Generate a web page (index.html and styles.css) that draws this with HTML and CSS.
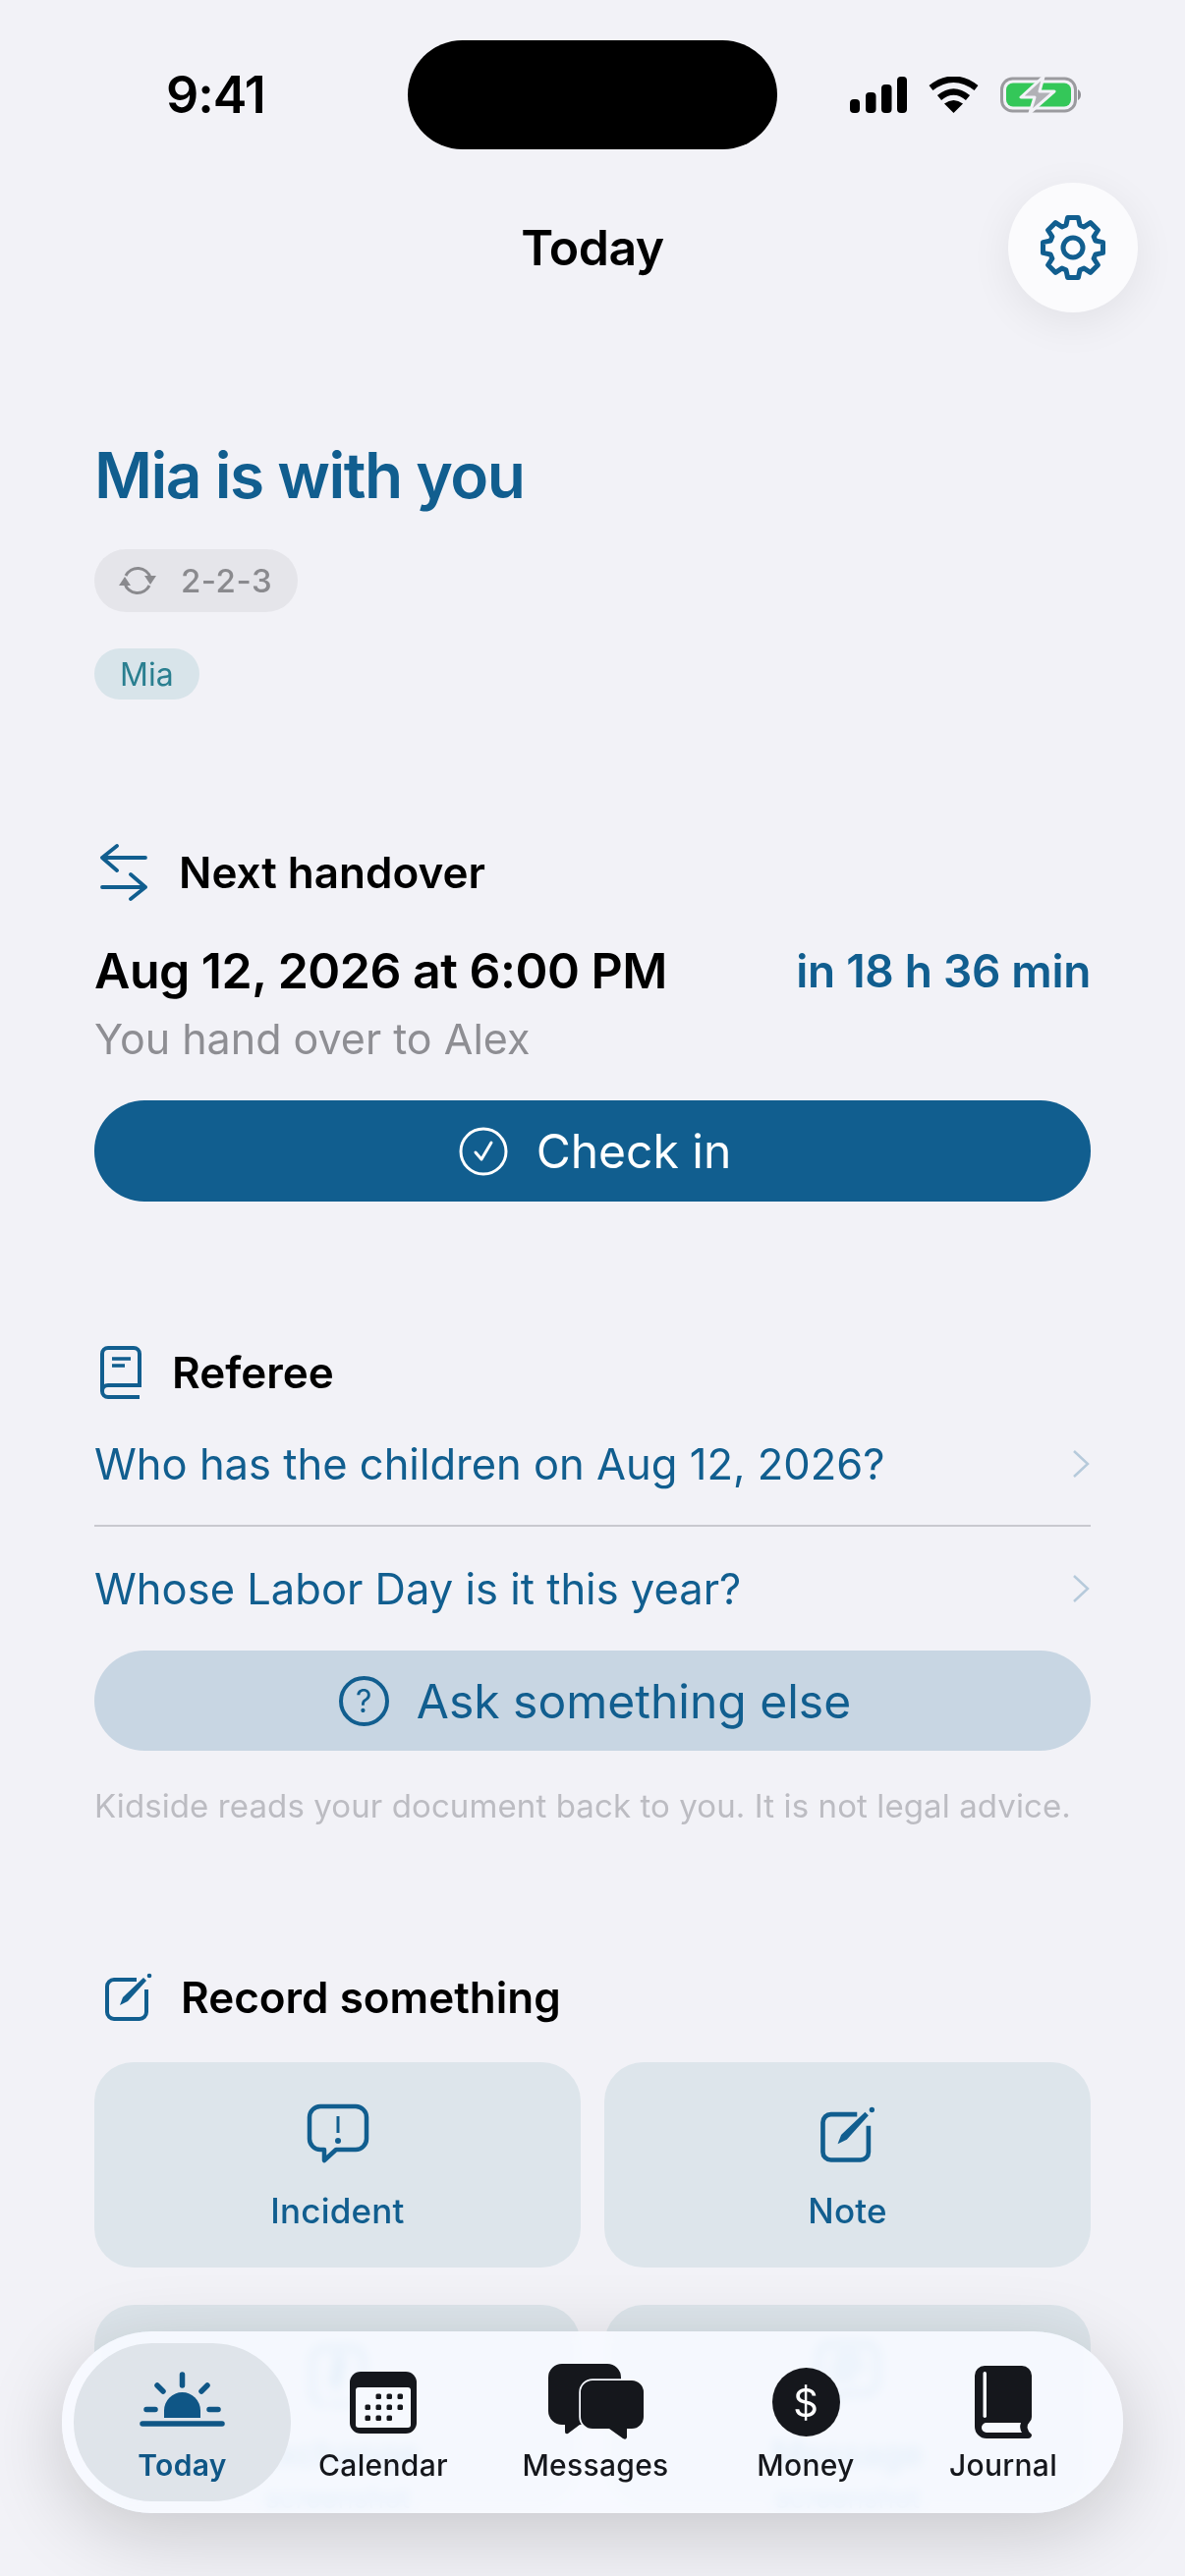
FILE: index.html
```html
<!DOCTYPE html>
<html lang="en">

<head>
  <meta charset="UTF-8">
  <title>Today</title>
  <link rel="stylesheet" href="styles.css">
</head>

<body>
  <div class="screen">

    <!-- Status bar -->
    <div class="status-bar">
      <span class="time">9:41</span>
      <div class="island"></div>
      <div class="status-icons">
        <svg class="signal" width="58" height="37" viewBox="0 0 58 37">
          <rect x="0" y="23" width="10" height="14" rx="4"/>
          <rect x="16" y="16" width="10.500" height="21" rx="4"/>
          <rect x="32" y="8" width="10.500" height="29" rx="4"/>
          <rect x="48" y="0" width="10" height="37" rx="4"/>
        </svg>
        <svg class="wifi" width="51" height="37" viewBox="0 0 51 37">
          <path d="M2.500 11.500Q25.500 -6 48.500 11.500" fill="none" stroke="#000" stroke-width="6.500"/>
          <path d="M11 21.500Q25.500 9.500 40 21.500" fill="none" stroke="#000" stroke-width="6.500"/>
          <path d="M25.500 37L16 27.500Q25.500 20.500 35 27.500Z"/>
        </svg>
        <svg class="battery" width="82" height="39" viewBox="0 0 82 39">
          <rect x="1.500" y="3" width="75" height="33" rx="11" fill="none" stroke="#9b9b9f" stroke-width="3"/>
          <rect x="6" y="7.500" width="66" height="24" rx="7" fill="#34c759"/>
          <path d="M79 14C81 15 82 17 82 19.500C82 22 81 24 79 25Z" fill="#8e8e93"/>
          <polygon points="44,1 21,22 35,22 30,38 55,16 40,16" fill="#b1b1b6" stroke="#f2f2f7" stroke-width="3" stroke-linejoin="round"/>
        </svg>
      </div>
    </div>

    <!-- Title bar -->
    <div class="title-bar">
      <span></span>
      <h2 class="page-title">Today</h2>
      <button class="gear-button">
        <svg width="70" height="70" viewBox="-35 -35 70 70" fill="none" stroke="#115e8f" stroke-width="5" stroke-linejoin="round">
          <polygon points="-7,-22.900 -5.400,-30.500 5.400,-30.500 7,-22.900 11.240,-21.140 17.750,-25.390 25.390,-17.750 21.140,-11.240 22.900,-7 30.500,-5.400 30.500,5.400 22.900,7 21.140,11.240 25.390,17.750 17.750,25.390 11.240,21.140 7,22.900 5.400,30.500 -5.400,30.500 -7,22.900 -11.240,21.140 -17.750,25.390 -25.390,17.750 -21.140,11.240 -22.900,7 -30.500,5.400 -30.500,-5.400 -22.900,-7 -21.140,-11.240 -25.390,-17.750 -17.750,-25.390 -11.240,-21.140"/>
          <circle r="10"/>
        </svg>
      </button>
    </div>

    <div class="content">

      <!-- Who is here -->
      <h1 class="hero">Mia is with you</h1>
      <div class="pill pill-schedule">
        <svg width="40" height="40" viewBox="0 0 40 40">
          <path d="M8 15A13.500 13.500 0 0 1 33 17M32 25A13.500 13.500 0 0 1 7 23" fill="none" stroke="#8a8a8e" stroke-width="3"/>
          <path d="M27 15H39L33 24ZM1 25H13L7 16Z" fill="#8a8a8e"/>
        </svg>
        <span>2-2-3</span>
      </div>
      <div class="pill pill-child">Mia</div>

      <!-- Next handover -->
      <div class="section-head section-handover">
        <svg width="48" height="58" viewBox="0 0 48 58" fill="none" stroke="#115e8f" stroke-width="3.800" stroke-linecap="round" stroke-linejoin="round">
          <path d="M46 14H2M17 2L2 14L17 27"/>
          <path d="M2 44H46M31 31L46 44L31 56"/>
        </svg>
        <span>Next handover</span>
      </div>
      <div class="handover-row">
        <span class="handover-date">Aug 12, 2026 at 6:00 PM</span>
        <span class="handover-left">in 18 h 36 min</span>
      </div>
      <div class="handover-sub">You hand over to Alex</div>
      <button class="wide-button button-primary">
        <svg width="50" height="50" viewBox="0 0 50 50" fill="none" stroke="#fff" stroke-width="3">
          <circle cx="25" cy="25" r="23"/>
          <path d="M17 26L23 33L33 16" stroke-linecap="round" stroke-linejoin="round"/>
        </svg>
        <span>Check in</span>
      </button>

      <!-- Referee -->
      <div class="section-head section-referee">
        <svg width="42" height="54" viewBox="0 0 42 54" fill="none" stroke="#115e8f" stroke-width="4">
          <path d="M2 46V8A6 6 0 0 1 8 2H34A6 6 0 0 1 40 8V40H8A6 6 0 0 0 8 52H40"/>
          <path d="M12 13H31M12 20H25" stroke-width="3.500"/>
        </svg>
        <span>Referee</span>
      </div>
      <div class="question">
        <span>Who has the children on Aug 12, 2026?</span>
        <svg width="20" height="30" viewBox="0 0 20 30" fill="none" stroke="#b6cadb" stroke-width="2.500"><path d="M3 2L17 15L3 28"/></svg>
      </div>
      <div class="question question-last">
        <span>Whose Labor Day is it this year?</span>
        <svg width="20" height="30" viewBox="0 0 20 30" fill="none" stroke="#b6cadb" stroke-width="2.500"><path d="M3 2L17 15L3 28"/></svg>
      </div>
      <button class="wide-button button-soft">
        <span class="ask-mark">?</span>
        <span>Ask something else</span>
      </button>
      <p class="disclaimer">Kidside reads your document back to you. It is not legal advice.</p>

      <!-- Record something -->
      <div class="section-head section-record">
        <svg width="50" height="50" viewBox="0 0 50 50" fill="none" stroke="#115e8f" stroke-width="4">
          <path d="M33 7H10A7 7 0 0 0 3 14V40A7 7 0 0 0 10 47H36A7 7 0 0 0 43 40V17"/>
          <path d="M16 33L19 25L40 5L43 8L24 29Z" fill="#115e8f" stroke="none"/>
          <circle cx="46" cy="3" r="2.300" fill="#115e8f" stroke="none"/>
        </svg>
        <span>Record something</span>
      </div>
      <div class="record-grid">
        <div class="record-card">
          <div class="card-icon">
            <svg width="64" height="61" viewBox="0 0 64 61" fill="none" stroke="#115e8f" stroke-width="4.500">
              <path d="M14 3H50A11 11 0 0 1 61 14V36A11 11 0 0 1 50 47H30L18 58V47H14A11 11 0 0 1 3 36V14A11 11 0 0 1 14 3Z" stroke-linejoin="round"/>
              <path d="M32 13V30" stroke-width="3"/>
              <circle cx="32" cy="38" r="3" fill="#115e8f" stroke="none"/>
            </svg>
          </div>
          <span class="card-label">Incident</span>
        </div>
        <div class="record-card">
          <div class="card-icon">
            <svg width="58" height="58" viewBox="0 0 50 50" fill="none" stroke="#115e8f" stroke-width="4">
              <path d="M33 7H10A7 7 0 0 0 3 14V40A7 7 0 0 0 10 47H36A7 7 0 0 0 43 40V17"/>
              <path d="M16 33L19 25L40 5L43 8L24 29Z" fill="#115e8f" stroke="none"/>
              <circle cx="46" cy="3" r="2.300" fill="#115e8f" stroke="none"/>
            </svg>
          </div>
          <span class="card-label">Note</span>
        </div>
        <div class="record-card">
          <div class="card-icon">
            <svg width="58" height="62" viewBox="0 0 58 62" fill="none" stroke="#115e8f" stroke-width="4.500">
              <path d="M14 3H44A11 11 0 0 1 55 14V44A16 16 0 0 1 29 59A16 16 0 0 1 3 44V14A11 11 0 0 1 14 3Z"/>
              <path d="M26 12C38 16 22 30 28 44" stroke-width="9"/>
            </svg>
          </div>
          <span class="card-label">Exchange</span>
          <span class="card-sub">screenshot</span>
        </div>
        <div class="record-card">
          <div class="card-icon">
            <svg width="66" height="66" viewBox="0 0 66 66" fill="none" stroke="#115e8f" stroke-width="4.500">
              <path d="M14 3H52A11 11 0 0 1 63 14V42A11 11 0 0 1 52 53H28L14 63V53A11 11 0 0 1 3 42V14A11 11 0 0 1 14 3Z" stroke-linejoin="round"/>
              <path d="M20 15H46M16 26H50M16 37H40" stroke-width="5"/>
            </svg>
          </div>
          <span class="card-label">Message</span>
          <span class="card-sub">screenshot</span>
        </div>
      </div>

    </div>

    <!-- Tab bar -->
    <nav class="tab-bar">
      <div class="tab tab-active">
        <div class="tab-icon">
          <svg class="sun" width="87" height="56" viewBox="0 0 87 56" fill="none" stroke="#0f5686" stroke-width="5.500" stroke-linecap="round">
            <path d="M25 47V39.500A18.500 18.500 0 0 1 62 39.500V47Z" fill="#0f5686" stroke="none"/>
            <path d="M3 53H84"/>
            <path d="M7 38.500H16M71 38.500H80"/>
            <path d="M43.500 3V14M18 14L24 20M69 14L63 20"/>
          </svg>
        </div>
        <span class="tab-label">Today</span>
      </div>
      <div class="tab">
        <div class="tab-icon">
          <svg width="68" height="63" viewBox="0 0 68 63">
            <rect width="68" height="63" rx="11" fill="#15171c"/>
            <rect x="6" y="16" width="56" height="41" rx="3" fill="#f6f9fe"/>
            <g fill="#15171c">
              <rect x="26.500" y="22.500" width="5.500" height="5.500" rx="1.500"/>
              <rect x="37.500" y="22.500" width="5.500" height="5.500" rx="1.500"/>
              <rect x="48.500" y="22.500" width="5.500" height="5.500" rx="1.500"/>
              <rect x="15.500" y="33.500" width="5.500" height="5.500" rx="1.500"/>
              <rect x="26.500" y="33.500" width="5.500" height="5.500" rx="1.500"/>
              <rect x="37.500" y="33.500" width="5.500" height="5.500" rx="1.500"/>
              <rect x="48.500" y="33.500" width="5.500" height="5.500" rx="1.500"/>
              <rect x="15.500" y="44.500" width="5.500" height="5.500" rx="1.500"/>
              <rect x="26.500" y="44.500" width="5.500" height="5.500" rx="1.500"/>
              <rect x="37.500" y="44.500" width="5.500" height="5.500" rx="1.500"/>
            </g>
          </svg>
        </div>
        <span class="tab-label">Calendar</span>
      </div>
      <div class="tab">
        <div class="tab-icon">
          <svg width="97" height="78" viewBox="0 0 97 78" fill="#15171c">
            <path d="M14 0H60A14 14 0 0 1 74 14V48A14 14 0 0 1 60 62H32L20 71Q17 72 17 69V62H14A14 14 0 0 1 0 48V14A14 14 0 0 1 14 0Z"/>
            <path d="M45 17H85A12 12 0 0 1 97 29V54A12 12 0 0 1 85 66H80V75Q79 78 76 76L62 66H45A12 12 0 0 1 33 54V29A12 12 0 0 1 45 17Z" stroke="#f6f9fe" stroke-width="3.500" paint-order="stroke"/>
          </svg>
        </div>
        <span class="tab-label">Messages</span>
      </div>
      <div class="tab">
        <div class="tab-icon">
          <div class="money-icon">$</div>
        </div>
        <span class="tab-label">Money</span>
      </div>
      <div class="tab">
        <div class="tab-icon">
          <svg width="58" height="74" viewBox="0 0 58 74">
            <path d="M10 0H48A10 10 0 0 1 58 10V52Q58 55 56 57Q50 63 58 70Q58 74 54 74H12A12 12 0 0 1 0 62V10A10 10 0 0 1 10 0Z" fill="#15171c"/>
            <rect x="8.500" y="6" width="3.500" height="47" rx="1.700" fill="#f6f9fe"/>
            <path d="M12 58H47Q45 63 48 68H12A5 5 0 0 1 12 58Z" fill="#f6f9fe"/>
          </svg>
        </div>
        <span class="tab-label">Journal</span>
      </div>
    </nav>

  </div>
</body>

</html>
```

FILE: styles.css
```css
* {
  box-sizing: border-box;
}

body {
  margin: 0;
  padding: 0;
  font-family: 'Inter', 'Noto Sans', sans-serif;
  background: #f2f2f7;
  color: #000;
}

button {
  font-family: inherit;
  border: none;
  padding: 0;
}

.screen {
  position: relative;
  width: 1206px;
  height: 2622px;
  overflow: hidden;
  background: #f2f2f7;
}

/* Status bar */
.status-bar {
  display: flex;
  align-items: center;
  height: 111px;
  margin-top: 41px;
  padding-left: 169px;
}

.time {
  width: 100px;
  font-size: 52px;
  font-weight: 600;
  letter-spacing: -1px;
  white-space: nowrap;
}

.island {
  width: 376px;
  height: 111px;
  margin-left: 146px;
  border-radius: 56px;
  background: #000;
}

.status-icons {
  display: flex;
  align-items: center;
  gap: 22px;
  margin-left: 74px;
}

/* Title bar */
.title-bar {
  display: grid;
  grid-template-columns: 1fr auto 1fr;
  align-items: center;
  margin: 34px 48px 0;
}

.page-title {
  margin: 0;
  font-size: 50px;
  font-weight: 600;
  letter-spacing: -0.5px;
}

.gear-button {
  justify-self: end;
  display: flex;
  align-items: center;
  justify-content: center;
  width: 132px;
  height: 132px;
  border-radius: 50%;
  background: #fbfbfd;
  box-shadow: 0 10px 44px rgba(0, 0, 0, 0.07);
}

/* Main column */
.content {
  padding: 0 96px;
}

.hero {
  margin: 128px 0 0;
  font-size: 64px;
  line-height: 76px;
  font-weight: 600;
  letter-spacing: -1.5px;
  color: #115e8f;
}

.pill {
  display: flex;
  align-items: center;
  width: fit-content;
  border-radius: 32px;
}

.pill-schedule {
  gap: 24px;
  height: 64px;
  margin-top: 37px;
  padding: 0 26px 0 24px;
  font-size: 33px;
  font-weight: 500;
  letter-spacing: 0.5px;
  color: #8a8a8e;
  background: #e5e5ea;
}

.pill-child {
  height: 52px;
  margin-top: 37px;
  padding: 0 26px;
  font-size: 32px;
  color: #2a7f90;
  background: #d8e4ea;
}

.section-head {
  display: flex;
  align-items: center;
  font-size: 44px;
  font-weight: 600;
}

.section-handover {
  gap: 32px;
  margin: 147px 0 0 6px;
}

.section-referee {
  gap: 31px;
  margin: 147px 0 0 6px;
}

.section-record {
  gap: 28px;
  margin: 146px 0 0 10px;
}

.handover-row {
  display: flex;
  align-items: center;
  justify-content: space-between;
  margin-top: 41px;
  line-height: 60px;
}

.handover-date {
  font-size: 50px;
  font-weight: 600;
  letter-spacing: -0.5px;
}

.handover-left {
  font-size: 46px;
  font-weight: 600;
  letter-spacing: -0.3px;
  color: #115e8f;
}

.handover-sub {
  margin-top: 12px;
  font-size: 43px;
  line-height: 54px;
  color: #8e8e93;
}

.wide-button {
  display: flex;
  align-items: center;
  justify-content: center;
  width: 100%;
  padding-left: 5px;
  border-radius: 51px;
}

.button-primary {
  gap: 29px;
  height: 103px;
  margin-top: 36px;
  font-size: 48px;
  color: #fff;
  background: #115e8f;
}

.button-soft {
  gap: 28px;
  height: 102px;
  font-size: 48px;
  color: #115e8f;
  background: #c8d6e3;
}

.ask-mark {
  display: flex;
  align-items: center;
  justify-content: center;
  width: 51px;
  height: 51px;
  border: 4px solid #115e8f;
  border-radius: 50%;
  font-size: 32px;
}

.question {
  display: flex;
  align-items: center;
  justify-content: space-between;
  height: 130px;
  padding-top: 3px;
  border-bottom: 2px solid #c9c9cf;
  font-size: 43.500px;
  color: #115e8f;
}

.question-last {
  height: 126px;
  padding-top: 0;
  border-bottom: none;
}

.disclaimer {
  margin: 34px 0 0;
  font-size: 33px;
  line-height: 44px;
  letter-spacing: 0.1px;
  white-space: nowrap;
  color: #bcbcc2;
}

/* Record grid */
.record-grid {
  display: grid;
  grid-template-columns: 495px 495px;
  gap: 38px 24px;
  margin-top: 39px;
}

.record-card {
  display: flex;
  flex-direction: column;
  align-items: center;
  height: 209px;
  padding-top: 41px;
  border-radius: 40px;
  background: #dde5eb;
  color: #115e8f;
}

.card-icon {
  display: flex;
  align-items: flex-end;
  height: 62px;
}

.card-label {
  margin-top: 27px;
  font-size: 35px;
  line-height: 42px;
  font-weight: 500;
  letter-spacing: 0.2px;
}

.card-sub {
  margin-top: 8px;
  font-size: 28px;
  line-height: 34px;
}

/* Tab bar */
.tab-bar {
  position: absolute;
  left: 63px;
  top: 2373px;
  display: grid;
  grid-template-columns: 221px 188px 244px 184px 218px;
  width: 1080px;
  height: 185px;
  padding: 12px 12px;
  border-radius: 92px;
  background: rgba(247, 250, 255, 0.92);
  backdrop-filter: blur(6px) saturate(1.5);
  box-shadow: 0 20px 80px rgba(0, 0, 0, 0.18);
}

.tab {
  display: flex;
  flex-direction: column;
  align-items: center;
  height: 161px;
  padding-top: 20px;
  border-radius: 80px;
  color: #15171c;
}

.tab-active {
  background: #dfe4ea;
  color: #0f5686;
}

.tab-icon {
  display: flex;
  align-items: center;
  justify-content: center;
  height: 80px;
}

.sun {
  margin-bottom: 6px;
}

.tab-label {
  margin-top: 4px;
  font-size: 30px;
  line-height: 40px;
  font-weight: 500;
  letter-spacing: 0.3px;
}

.tab-active .tab-label {
  font-weight: 600;
}

.money-icon {
  display: flex;
  align-items: center;
  justify-content: center;
  width: 69px;
  height: 70px;
  border-radius: 50%;
  font-size: 40px;
  color: #fff;
  background: #15171c;
}
```
